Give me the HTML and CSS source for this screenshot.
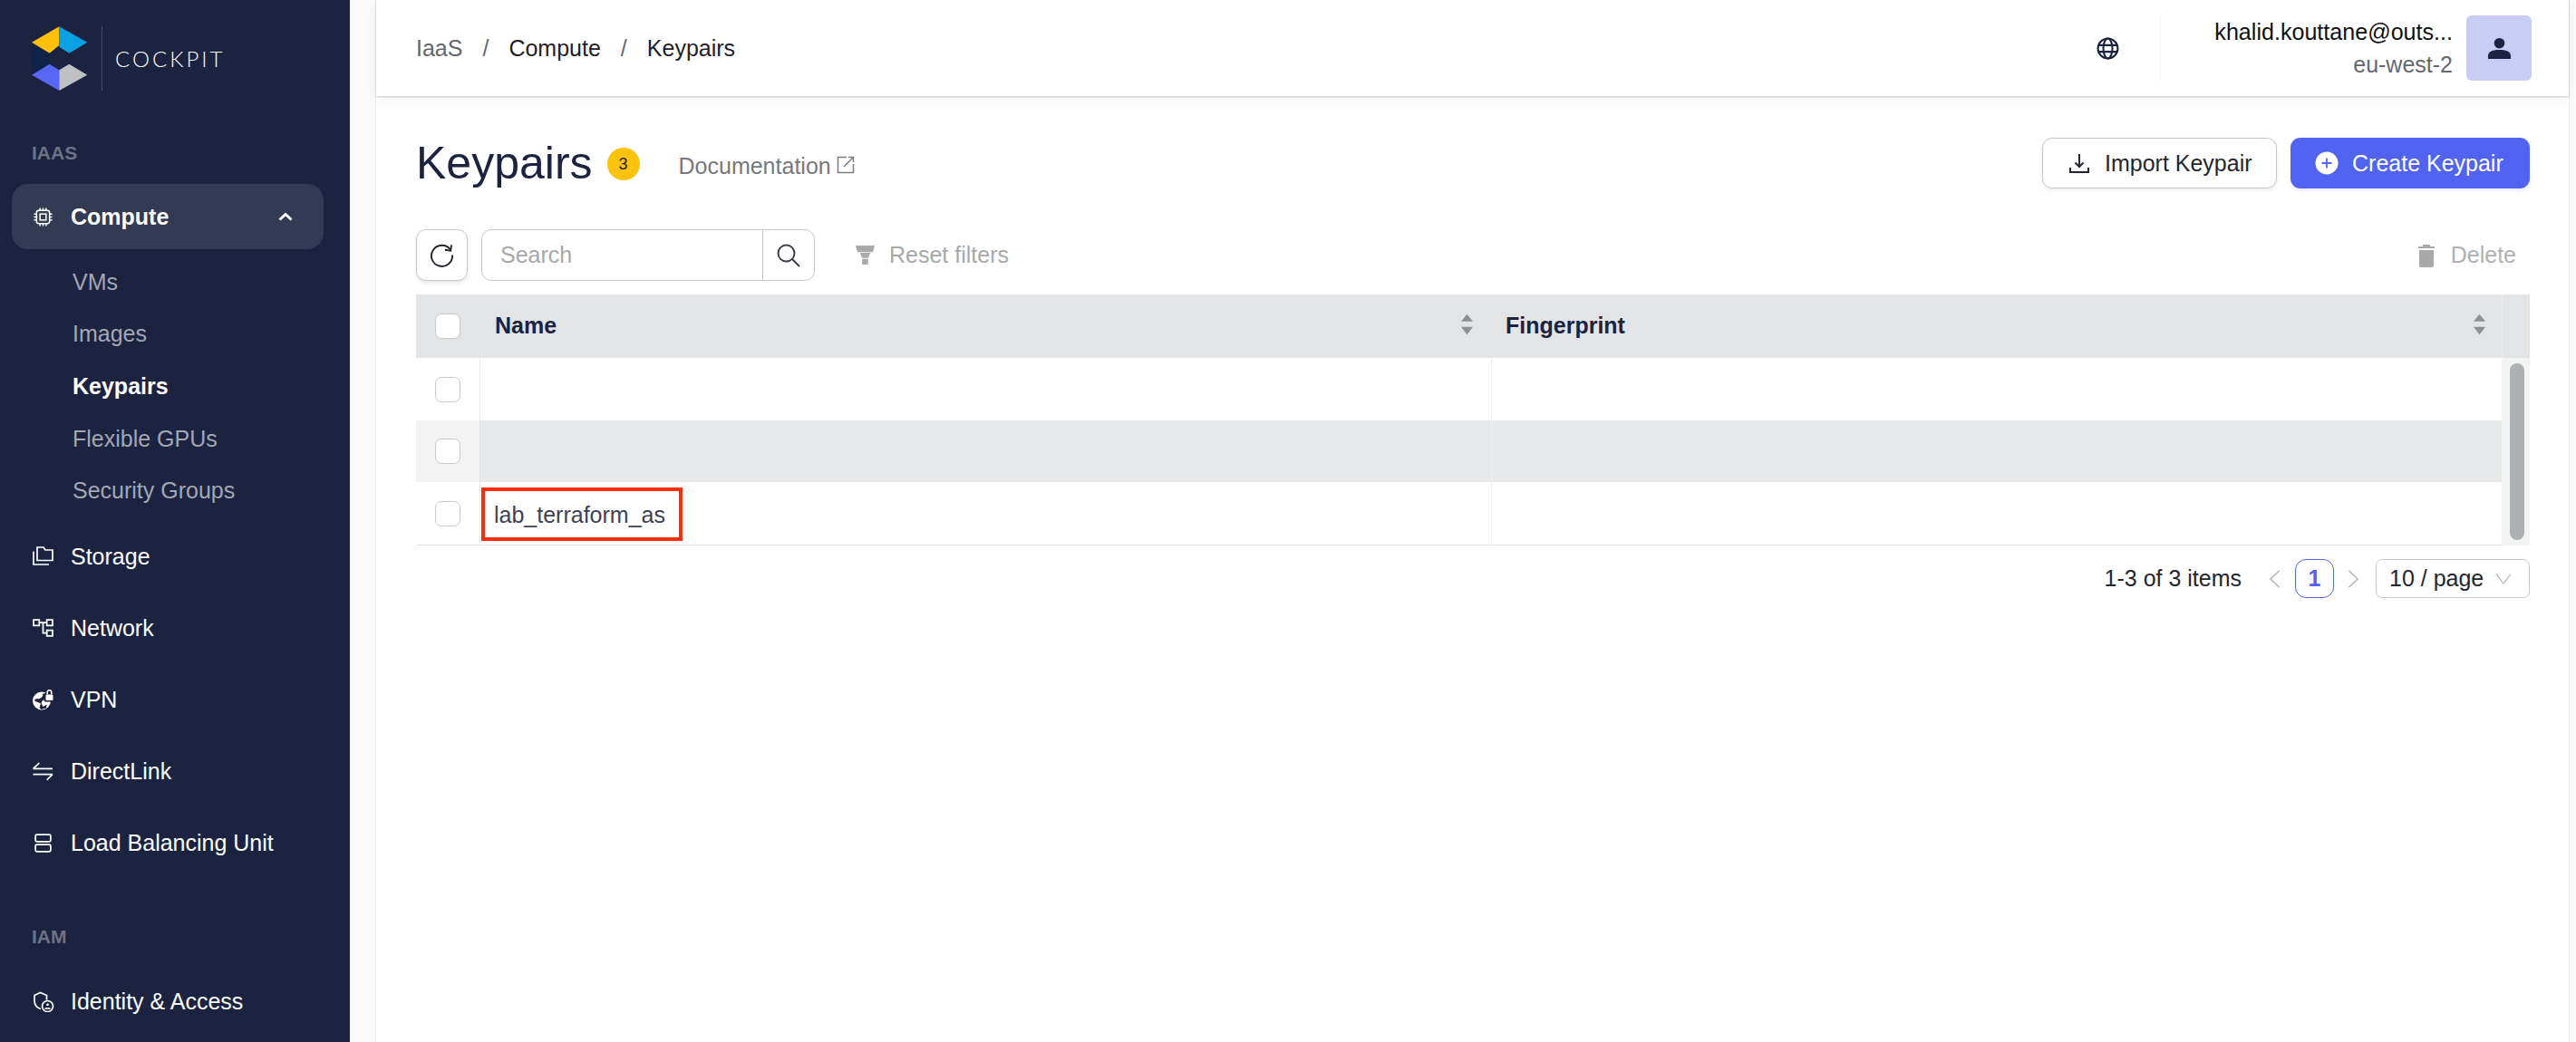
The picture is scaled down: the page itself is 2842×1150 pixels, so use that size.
FILE: index.html
```html
<!DOCTYPE html>
<html lang="en">
<head>
<meta charset="utf-8">
<title>Keypairs - Cockpit</title>
<link rel="stylesheet" href="styles.css">
</head>
<body>
<aside class="sidebar">
  <div class="brand">
    <svg class="brand-mark" viewBox="0 0 62 72">
      <polygon fill="#fcbf0a" points="0,17.7 30.3,0.3 30.3,21 19.6,29.7"/>
      <polygon fill="#0aa0e2" points="30.3,0.3 61.3,17.7 41.3,29.7 30.3,22.7"/>
      <polygon fill="#0e2347" points="0,19 19.6,29.7 19.6,41.7 0,53"/>
      <polygon fill="#5767f4" points="0,53.7 19.6,41.7 30.3,48.3 30.3,71"/>
      <polygon fill="#bfc0c5" points="30.3,48.3 41.3,41.7 61.3,53.7 30.3,71"/>
    </svg>
    <span class="brand-line"></span>
    <span class="brand-name">COCKPIT</span>
  </div>

  <div class="nav-label nav-label-first">IAAS</div>
  <div class="nav-item nav-open">
    <svg class="nav-icon" viewBox="0 0 22 22" fill="none" stroke="#fff" stroke-width="1.6">
      <rect x="3.5" y="3.5" width="15" height="15" rx="2.5"/>
      <rect x="7.5" y="7.5" width="7" height="7"/>
      <path d="M7.5 0.5v3M11 0.5v3M14.5 0.5v3M7.5 18.500v3M11 18.500v3M14.500 18.500v3M0.500 7.500h3M0.500 11h3M0.500 14.500h3M18.500 7.500h3M18.500 11h3M18.500 14.500h3"/>
    </svg>
    <span class="nav-text">Compute</span>
    <svg class="nav-chevron" viewBox="0 0 16 10" fill="none" stroke="#fff" stroke-width="3"><path d="M1.500 8.500 8 2.500l6.500 6"/></svg>
  </div>
  <div class="sub-item">VMs</div>
  <div class="sub-item">Images</div>
  <div class="sub-item sub-active">Keypairs</div>
  <div class="sub-item">Flexible GPUs</div>
  <div class="sub-item">Security Groups</div>

  <div class="nav-list">
    <div class="nav-item">
      <svg class="nav-icon nav-icon-square" viewBox="0 0 24 24" fill="none" stroke="#fff" stroke-width="1.700">
        <path d="M5 16.500V2h7l2 3h8v11.500z"/>
        <path d="M1 6.500V21h17"/>
      </svg>
      <span class="nav-text">Storage</span>
    </div>
    <div class="nav-item">
      <svg class="nav-icon" viewBox="0 0 22 20" fill="none" stroke="#fff" stroke-width="1.700">
        <rect x="1" y="1" width="6" height="6"/>
        <rect x="15" y="1" width="6" height="6"/>
        <rect x="15" y="12" width="6" height="6"/>
        <path d="M7 4h8M11 4v11h4"/>
      </svg>
      <span class="nav-text">Network</span>
    </div>
    <div class="nav-item">
      <svg class="nav-icon nav-icon-square" viewBox="0 0 24 24">
        <circle cx="10" cy="13.500" r="10" fill="#fff"/>
        <path fill="#1b2340" d="M2.500 11.500c3 .5 5-1.500 6-3.500l3-2.500 4 1-1 5-3.500 1.500-1.500 3 2 4 4-2.500-.5 4-5.500 1.500-2-2 1.500-4.500-3-1.500-3.500-1z"/>
        <path fill="#fff" d="M5 9.500 8 7l2.500-1 1 1.500-2 2.500-3 1.500zM12 15l2.500-1.500 2 1-1 2.500-2 .5z"/>
        <rect x="12.500" y="4.500" width="11.500" height="10" rx="2" fill="#1b2340"/>
        <rect x="14.500" y="6.500" width="8" height="6.500" rx="1" fill="#fff"/>
        <path fill="none" stroke="#fff" stroke-width="1.500" d="M16.200 6.500V4a2.300 2.300 0 0 1 4.600 0v2.500"/>
      </svg>
      <span class="nav-text">VPN</span>
    </div>
    <div class="nav-item">
      <svg class="nav-icon" viewBox="0 0 22 20" fill="none" stroke="#fff" stroke-width="1.500">
        <path d="M0.500 7H21M0.500 7 7 1M21 13H0.500M21 13l-6 6"/>
      </svg>
      <span class="nav-text">DirectLink</span>
    </div>
    <div class="nav-item">
      <svg class="nav-icon" viewBox="0 0 22 20" fill="none" stroke="#fff" stroke-width="1.700">
        <rect x="3" y="1" width="16" height="7.500" rx="1.500"/>
        <rect x="3" y="11.500" width="16" height="7.500" rx="1.500"/>
      </svg>
      <span class="nav-text">Load Balancing Unit</span>
    </div>
    <div class="nav-label nav-label-second">IAM</div>
    <div class="nav-item">
      <svg class="nav-icon nav-icon-square" viewBox="0 0 24 24" fill="none" stroke="#fff" stroke-width="1.700">
        <path d="M9 20.500C4.500 19 2 16 2 11.500V5.500L8.500 2.500l7 3v5"/>
        <circle cx="16.500" cy="17.500" r="6" fill="#1b2340"/>
        <circle cx="16.500" cy="15.800" r="1.400" fill="#fff" stroke="none"/>
        <path d="M13.500 20h6" stroke-width="1.600"/>
      </svg>
      <span class="nav-text">Identity &amp; Access</span>
    </div>
  </div>
</aside>

<div class="shell">
  <main class="main">
    <header class="topbar">
      <nav class="crumbs">
        <span class="crumb-first">IaaS</span>
        <span class="crumb-sep">/</span>
        <span>Compute</span>
        <span class="crumb-sep">/</span>
        <span>Keypairs</span>
      </nav>
      <div class="account">
        <svg class="globe" viewBox="0 0 24 24" fill="none" stroke="#1b2340" stroke-width="2">
          <circle cx="12" cy="12" r="10.500"/>
          <ellipse cx="12" cy="12" rx="4.800" ry="10.500"/>
          <path d="M2 8.500h20M2 15.500h20"/>
        </svg>
        <span class="account-line"></span>
        <div class="account-text">
          <div class="account-mail">khalid.kouttane@outs...</div>
          <div class="account-region">eu-west-2</div>
        </div>
        <div class="avatar">
          <svg class="avatar-icon" viewBox="0 0 28 28" fill="#1b2340">
            <circle cx="14" cy="8" r="6"/>
            <path d="M1 26v-3c0-5 4-7.500 13-7.500S27 18 27 23v3z"/>
          </svg>
        </div>
      </div>
    </header>

    <section class="content">
      <div class="title-row">
        <div class="title-left">
          <h1 class="title">Keypairs</h1>
          <span class="count">3</span>
          <span class="doc-link">Documentation</span>
          <svg class="doc-icon" viewBox="0 0 20 20" fill="none" stroke="#7b7c80" stroke-width="1.500">
            <path d="M11 1.500H1.500v17h17V9M8 12 18.500 1.500M13 1.500h5.500V7"/>
          </svg>
        </div>
        <div class="title-actions">
          <button class="btn btn-plain">
            <svg class="btn-icon" viewBox="0 0 24 24" fill="none" stroke="#24262e" stroke-width="2">
              <path d="M12 2v14M7.500 11.500 12 16l4.500-4.500M2 17v5h20v-5"/>
            </svg>
            <span>Import Keypair</span>
          </button>
          <button class="btn btn-primary">
            <svg class="btn-icon" viewBox="0 0 26 26">
              <circle cx="13" cy="13" r="12.500" fill="#fff"/>
              <path d="M13 7.500v11M7.500 13h11" stroke="#5163f1" stroke-width="1.800"/>
            </svg>
            <span>Create Keypair</span>
          </button>
        </div>
      </div>

      <div class="toolbar">
        <button class="refresh">
          <svg class="refresh-icon" viewBox="0 0 28 28" fill="none" stroke="#24262e" stroke-width="2">
            <path d="M23.500 7.500A12 12 0 1 0 26 14"/>
            <path d="M25 2.500 24 9l-6.500-1"/>
          </svg>
        </button>
        <div class="search">
          <span class="search-text">Search</span>
          <span class="search-btn">
            <svg class="search-icon" viewBox="0 0 26 26" fill="none" stroke="#3b3e48" stroke-width="2">
              <circle cx="10.500" cy="10.500" r="9"/>
              <path d="M17 17l8 8"/>
            </svg>
          </span>
        </div>
        <div class="reset">
          <svg class="funnel" viewBox="0 0 24 22" fill="#a9a9a9"><path d="M1 0h22l-2 7.500H3zM6 8.500h12l-2.500 6h-7zM8.500 15.500h7V22h-7z"/></svg>
          <span>Reset filters</span>
        </div>
        <div class="delete">
          <svg class="trash" viewBox="0 0 20 26" fill="#a9a9a9"><path d="M1 5h18v-2h-5V1H6v2H1zM2 7h16v17a2 2 0 0 1-2 2H4a2 2 0 0 1-2-2z"/></svg>
          <span>Delete</span>
        </div>
      </div>

      <div class="table">
        <div class="thead">
          <div class="cell cell-check"><span class="check"></span></div>
          <div class="cell cell-head cell-head-name"><span>Name</span>
            <svg class="sort" viewBox="0 0 16 24" fill="#8e9193"><path d="M8 0l7 8.500H1zM1 15h14l-7 9z"/></svg>
          </div>
          <div class="cell cell-head"><span>Fingerprint</span>
            <svg class="sort" viewBox="0 0 16 24" fill="#8e9193"><path d="M8 0l7 8.500H1zM1 15h14l-7 9z"/></svg>
          </div>
          <div class="cell-scrollhead"></div>
        </div>
        <div class="tbody">
          <div class="rows">
            <div class="row row-a">
              <div class="cell cell-check"><span class="check"></span></div>
              <div class="cell cell-name"></div>
              <div class="cell"></div>
            </div>
            <div class="row row-b row-hover">
              <div class="cell cell-check"><span class="check"></span></div>
              <div class="cell cell-name"></div>
              <div class="cell"></div>
            </div>
            <div class="row row-c">
              <div class="cell cell-check"><span class="check"></span></div>
              <div class="cell cell-name">
                <span class="name-text">lab_terraform_as</span>
                <span class="highlight"></span>
              </div>
              <div class="cell"></div>
            </div>
          </div>
          <div class="scrolltrack"><div class="scrollthumb"></div></div>
        </div>
      </div>

      <div class="pager">
        <span class="pager-total">1-3 of 3 items</span>
        <svg class="pager-arrow" viewBox="0 0 14 24" fill="none" stroke="#b2b2b2" stroke-width="1.500"><path d="M12.500 2 2 12l10.500 10"/></svg>
        <span class="page-current">1</span>
        <svg class="pager-arrow" viewBox="0 0 14 24" fill="none" stroke="#b2b2b2" stroke-width="1.500"><path d="M1.500 2 12 12 1.500 22"/></svg>
        <div class="page-size">
          <span>10 / page</span>
          <svg class="size-chevron" viewBox="0 0 20 14" fill="none" stroke="#b2b2b2" stroke-width="1.300"><path d="M1 1l9 12 9-12"/></svg>
        </div>
      </div>
    </section>
  </main>
</div>
</body>
</html>
```
FILE: styles.css
```css
* { box-sizing: border-box; }
html, body { margin: 0; height: 100%; }
body {
  display: flex;
  overflow: hidden;
  background: #fafafa;
  font-family: "Liberation Sans", Arial, sans-serif;
  font-size: 25px;
  color: #1f2026;
}

/* sidebar */
.sidebar {
  flex: 0 0 386px;
  height: 1150px;
  padding-top: 29px;
  background: #1b2340;
  color: #fff;
}
.brand { display: flex; align-items: center; height: 71px; padding-left: 35px; }
.brand-mark { width: 62px; height: 72px; flex: none; }
.brand-line { width: 1px; height: 71px; margin-left: 15px; background: #474e68; }
.brand-name {
  margin-left: 14px;
  font-family: Lato, sans-serif;
  font-weight: 300;
  font-size: 24px;
  letter-spacing: 3px;
  color: #fff;
}
.nav-label { padding-left: 35px; font-size: 21px; line-height: 30px; font-weight: 700; color: #6d7284; }
.nav-label-first { margin-top: 54px; margin-bottom: 19px; }
.nav-label-second { margin-top: 49px; margin-bottom: 16px; }
.nav-item {
  display: flex;
  align-items: center;
  height: 79.200px;
  margin-right: 29px;
  margin-left: 13px;
  padding-left: 23px;
}
.nav-open {
  height: 72px;
  margin-bottom: 7.500px;
  border-radius: 18px;
  background: #323a54;
  font-weight: 700;
}
.nav-icon { width: 23px; height: 21px; flex: none; }
.nav-icon-square { width: 24px; height: 24px; }
.nav-icon-square + .nav-text { margin-left: 18px; }
.nav-text { margin-left: 19px; color: #fff; white-space: nowrap; }
.nav-chevron { width: 16px; height: 10px; margin-left: auto; margin-right: 34px; }
.sub-item {
  display: flex;
  align-items: center;
  height: 57.600px;
  padding-left: 80px;
  color: #a4a7b3;
}
.sub-active { color: #fff; font-weight: 700; }
.nav-list { margin-top: 4px; }

/* page shell */
.shell { flex: 1; min-width: 0; padding: 0 8px 0 28px; }
.main {
  height: 1150px;
  background: #fff;
  border-left: 1px solid #f0f0f0;
  box-shadow: 1px 0 0 #ececec;
}
.topbar {
  display: flex;
  align-items: center;
  justify-content: space-between;
  height: 106px;
  padding: 0 41px 0 44px;
  background: #fff;
  box-shadow: 0 1px 2px rgba(0, 0, 0, 0.2), 0 4px 14px rgba(0, 0, 0, 0.05);
  position: relative;
}
.crumbs { display: flex; gap: 22px; color: #1f2026; }
.crumb-first { color: #66676d; }
.crumb-sep { color: #66676d; }
.account { display: flex; align-items: center; }
.globe { width: 25px; height: 25px; }
.account-line { width: 1px; height: 72px; margin-left: 45px; background: #f3f3f3; }
.account-text { width: 322px; text-align: right; }
.account-mail { font-size: 25.100px; line-height: 36px; color: #111; white-space: nowrap; }
.account-region { line-height: 36px; color: #66676d; }
.avatar {
  display: flex;
  align-items: center;
  justify-content: center;
  width: 72px;
  height: 72px;
  margin-left: 15px;
  border-radius: 6px;
  background: #c8cdf5;
}
.avatar-icon { width: 27px; height: 27px; }

.content { padding: 46px 43px 0 44px; }
.title-row { display: flex; align-items: center; justify-content: space-between; height: 56px; }
.title-left { display: flex; align-items: center; }
.title { margin: 0; font-size: 50px; font-weight: 400; line-height: 56px; color: #1b2340; }
.count {
  display: flex;
  align-items: center;
  justify-content: center;
  width: 36px;
  height: 36px;
  margin: 2px 0 0 16px;
  border-radius: 50%;
  background: #fcc30a;
  font-size: 18px;
  color: #1f2026;
}
.doc-link { margin: 6px 0 0 43px; color: #77787c; }
.doc-icon { width: 20px; height: 20px; margin: 4px 0 0 6px; }
.title-actions { display: flex; gap: 15px; }
.btn {
  display: flex;
  align-items: center;
  height: 56px;
  border-radius: 11px;
  font-family: inherit;
  font-size: 25px;
}
.btn-plain {
  width: 259px;
  padding: 0 0 0 28px;
  border: 1px solid #c5c5c5;
  background: #fff;
  color: #24262e;
  box-shadow: 0 2px 4px rgba(0, 0, 0, 0.08);
}
.btn-primary {
  width: 264px;
  padding: 0 0 0 27px;
  border: 0;
  background: #5163f1;
  color: #fff;
  box-shadow: 0 2px 4px rgba(81, 99, 241, 0.15);
}
.btn-icon { width: 24px; height: 24px; margin-right: 16px; }
.btn-primary .btn-icon { width: 26px; height: 26px; margin-right: 15px; }

.toolbar { display: flex; align-items: center; height: 57px; margin-top: 45px; }
.refresh {
  display: flex;
  align-items: center;
  justify-content: center;
  width: 57px;
  height: 57px;
  padding: 0;
  border: 1px solid #c9c9c9;
  border-radius: 11px;
  background: #fff;
  box-shadow: 0 2px 4px rgba(0, 0, 0, 0.1);
}
.refresh-icon { width: 27px; height: 27px; }
.search {
  display: flex;
  align-items: center;
  width: 368px;
  height: 57px;
  margin-left: 15px;
  border: 1px solid #c9c9c9;
  border-radius: 11px;
}
.search-text { flex: 1; padding-left: 20px; color: #a8a8a8; }
.search-btn {
  display: flex;
  align-items: center;
  justify-content: center;
  width: 57px;
  height: 57px;
  border-left: 1px solid #c9c9c9;
}
.search-icon { width: 26px; height: 26px; }
.reset { display: flex; align-items: center; margin-left: 44px; color: #a8a8a8; }
.funnel { width: 23px; height: 21px; margin-right: 15px; }
.delete { display: flex; align-items: center; margin-left: auto; margin-right: 15px; color: #b0b0b0; }
.trash { width: 20px; height: 26px; margin-right: 17px; }

/* table */
.table { margin-top: 15px; }
.thead, .row { display: grid; grid-template-columns: 71px 1116px 1114px; }
.thead { grid-template-columns: 71px 1116px 1114px 31px; height: 70px; background: #e2e4e5; }
.cell { display: flex; align-items: center; padding-left: 15px; position: relative; }
.cell-check { justify-content: center; padding-left: 0; border-right: 1px solid #e8e9ea; }
.thead .cell-check { border-right-color: #e2e4e5; }
.cell-head { justify-content: space-between; padding-right: 17px; padding-left: 15px; padding-bottom: 1px; font-weight: 700; color: #1b2340; }
.cell-head-name { padding-right: 20px; padding-left: 16px; }
.cell-scrollhead { border-left: 1px solid #ececec; }
.check {
  display: block;
  width: 28px;
  height: 28px;
  border: 1px solid #c9c9c9;
  border-radius: 7px;
  background: #fff;
}
.sort { width: 15px; height: 24px; margin-top: -3px; }
.tbody { display: flex; }
.rows { width: 2301px; }
.row-a { height: 69px; }
.row-b { height: 68px; }
.row-c { height: 70px; border-bottom: 1px solid #e2e3e4; }
.row-hover { background: #e8e9ea; }
.row-hover .cell-check { background: #f3f3f3; border-right-color: #e2e3e4; }
.cell-name { border-right: 1px solid #eeeeee; padding-left: 15px; }
.name-text { margin-top: 3px; color: #3d4154; }
.highlight {
  position: absolute;
  left: 1px;
  top: 6px;
  width: 222px;
  height: 59px;
  border: 4px solid #fb2d0b;
}
.scrolltrack { flex: 1; padding: 6px 6px 6px 9px; background: #f2f3f3; }
.scrollthumb { height: 195px; border-radius: 8px; background: #aeb0b1; }

/* pager */
.pager { display: flex; align-items: center; justify-content: flex-end; height: 43px; margin-top: 15px; }
.pager-total { color: #24262e; }
.pager-arrow { width: 13px; height: 24px; flex: none; }
.pager-total + .pager-arrow { margin-left: 30px; }
.page-current {
  display: flex;
  align-items: center;
  justify-content: center;
  width: 43px;
  height: 43px;
  margin: 0 15px 0 16px;
  border: 1px solid #5163f1;
  border-radius: 12px;
  font-weight: 700;
  color: #5163f1;
}
.page-size {
  display: flex;
  align-items: center;
  width: 170px;
  height: 43px;
  margin-left: 18px;
  padding-left: 14px;
  border: 1px solid #c9c9c9;
  border-radius: 7px;
  color: #24262e;
}
.size-chevron { width: 18px; height: 12px; margin-left: 13px; }
```
